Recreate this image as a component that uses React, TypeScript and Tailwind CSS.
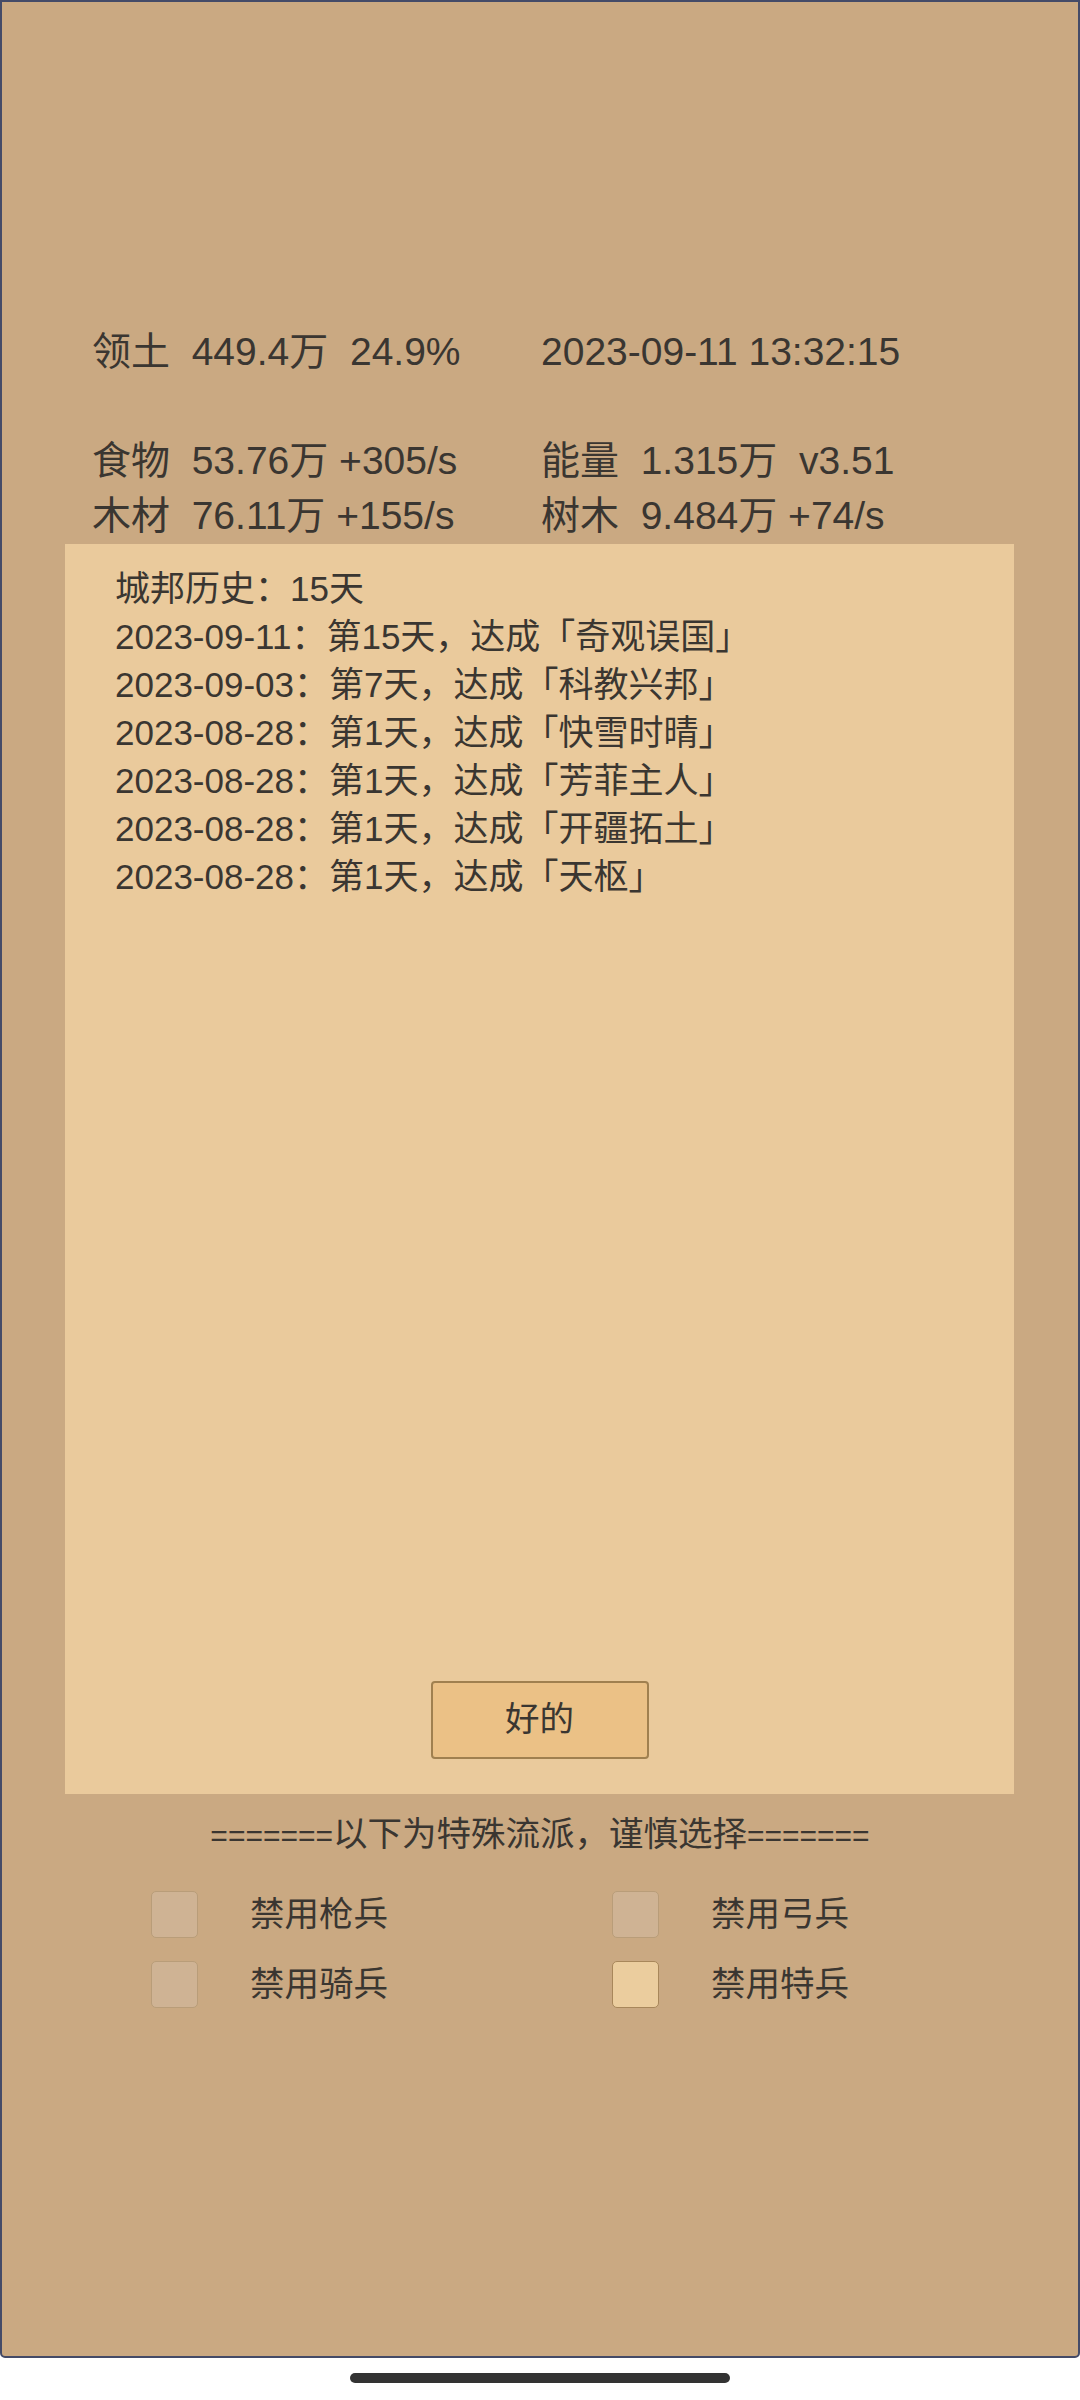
import React from "react";

const FONT = "font-['Liberation_Sans','Noto_Sans_CJK_SC',sans-serif]";

const history = [
  "城邦历史：15天",
  "2023-09-11：第15天，达成「奇观误国」",
  "2023-09-03：第7天，达成「科教兴邦」",
  "2023-08-28：第1天，达成「快雪时晴」",
  "2023-08-28：第1天，达成「芳菲主人」",
  "2023-08-28：第1天，达成「开疆拓土」",
  "2023-08-28：第1天，达成「天枢」",
];

function Check({ label, checked }: { label: string; checked?: boolean }) {
  return (
    <div className="flex items-center h-[47px]">
      <div
        className={
          checked
            ? "w-[47px] h-[47px] rounded-[5px] border-[1.5px] border-[#a8875b] bg-[#ebcd9e]"
            : "w-[47px] h-[47px] rounded-[5px] border-[1.5px] border-[#b99d79] bg-[#cfb394]"
        }
      />
      <span className="ml-[52px] text-[34.5px] leading-[47px]">{label}</span>
    </div>
  );
}

export default function App() {
  return (
    <div className={`w-[1080px] h-[2400px] bg-white flex flex-col text-[#3a3631] ${FONT}`}>
      <div className="h-[2358px] border-2 border-[#444b68] rounded-b-[5px] bg-[#caa982] flex flex-col">
        <div className="pt-[323px] pl-[90px] text-[39px] leading-[54.67px] whitespace-pre grid grid-cols-[449px_1fr]">
          <div>{"领土  449.4万  24.9%"}</div>
          <div>{"2023-09-11 13:32:15"}</div>
          <div>{" "}</div>
          <div>{" "}</div>
          <div>{"食物  53.76万 +305/s"}</div>
          <div>{"能量  1.315万  v3.51"}</div>
          <div>{"木材  76.11万 +155/s"}</div>
          <div>{"树木  9.484万 +74/s"}</div>
        </div>

        <div className="ml-[63px] w-[949px] h-[1250px] bg-[#eaca9c] flex flex-col justify-between">
          <div className="pt-[21px] pl-[50px] text-[35px] leading-[48px]">
            {history.map((h, i) => (
              <div key={i}>{h}</div>
            ))}
          </div>
          <div className="flex justify-center mb-[35px]">
            <button className="w-[218px] h-[78px] rounded-[4px] border-2 border-[#a0804f] bg-[#ebc186] text-[34.5px] text-[#3a3631] flex items-center justify-center">
              好的
            </button>
          </div>
        </div>

        <div className="mt-[16px] h-[48px] text-center text-[34.5px] leading-[48px]">
          <span className="text-[30px] leading-none">=======</span>
          <span>以下为特殊流派，谨慎选择</span>
          <span className="text-[30px] leading-none">=======</span>
        </div>

        <div className="mt-[33px] pl-[149px] grid grid-cols-[461px_1fr] gap-y-[23px]">
          <Check label="禁用枪兵" />
          <Check label="禁用弓兵" />
          <Check label="禁用骑兵" />
          <Check label="禁用特兵" checked />
        </div>
      </div>
      <div className="flex-1 flex justify-center pt-[15px]">
        <div className="w-[380px] h-[10px] rounded-full bg-[#333333]" />
      </div>
    </div>
  );
}
